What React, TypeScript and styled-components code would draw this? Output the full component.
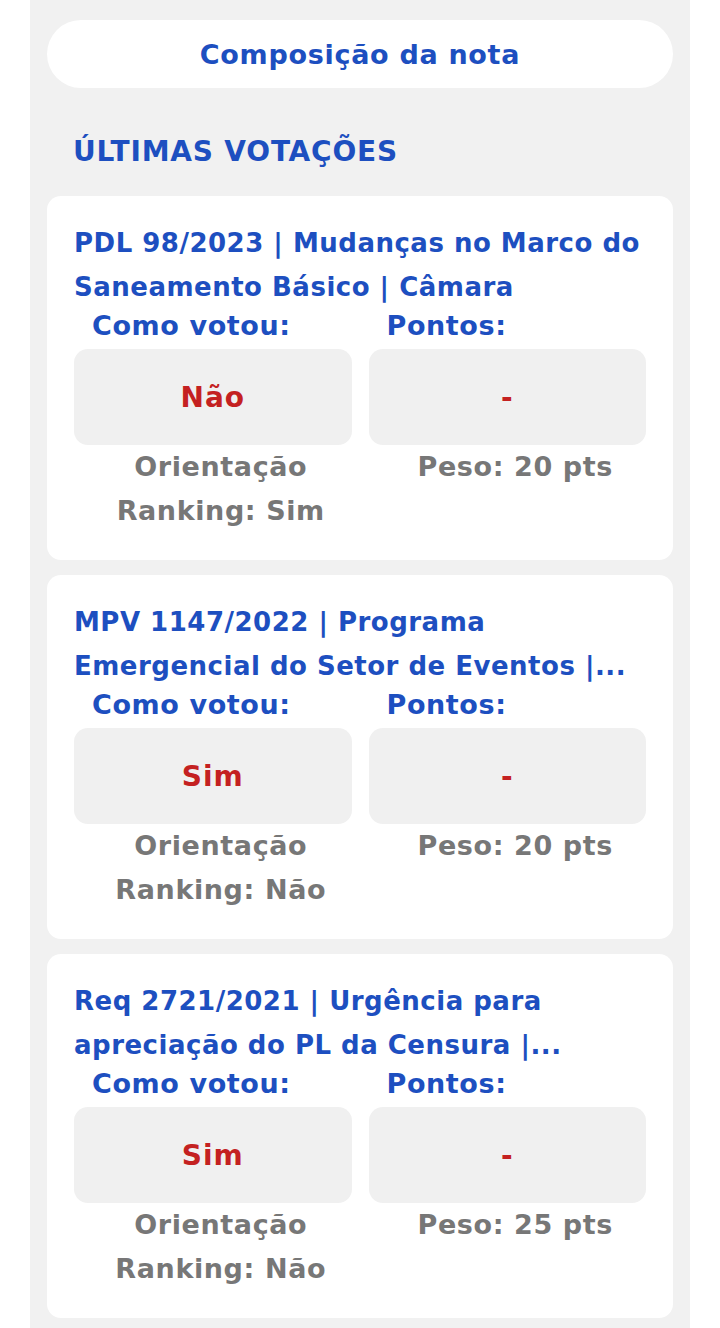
import React from 'react';
import styled, {createGlobalStyle} from 'styled-components';

const GlobalStyle = createGlobalStyle`
  html, body {
    margin: 0;
    padding: 0;
    background: #ffffff;
  }
  body {
    font-family: 'DejaVu Sans', 'Noto Sans', sans-serif;
  }
`;

type Vote = {
  title: string;
  voted: string;
  points: string;
  guidance: string;
  weight: number;
};

const votes: Vote[] = [
  {
    title: 'PDL 98/2023 | Mudanças no Marco do Saneamento Básico | Câmara',
    voted: 'Não',
    points: '-',
    guidance: 'Sim',
    weight: 20,
  },
  {
    title: 'MPV 1147/2022 | Programa Emergencial do Setor de Eventos |...',
    voted: 'Sim',
    points: '-',
    guidance: 'Não',
    weight: 20,
  },
  {
    title: 'Req 2721/2021 | Urgência para apreciação do PL da Censura |...',
    voted: 'Sim',
    points: '-',
    guidance: 'Não',
    weight: 25,
  },
];

const Panel = styled.main`
  margin: 0 30px;
  min-height: 1328px;
  box-sizing: border-box;
  background: #f1f1f1;
  padding: 20px 17px 12px;
`;

const NoteButton = styled.button`
  display: block;
  width: 100%;
  height: 68px;
  border: none;
  border-radius: 34px;
  background: #ffffff;
  color: #1d4fc0;
  font-family: inherit;
  font-weight: 700;
  font-size: 27px;
  letter-spacing: 0.7px;
  cursor: pointer;
`;

const SectionTitle = styled.h2`
  margin: 0;
  padding: 44px 0 24px 26px;
  color: #1d4fc0;
  font-size: 28px;
  letter-spacing: 0.8px;
  line-height: 40px;
  font-weight: 700;
`;

const List = styled.div`
  display: flex;
  flex-direction: column;
  gap: 15px;
`;

const Card = styled.section`
  background: #ffffff;
  border-radius: 14px;
  padding: 25px 27px 27px;
`;

const CardTitle = styled.h3`
  margin: 0 -6px 0 0;
  color: #1d4fc0;
  font-size: 26px;
  letter-spacing: 0.5px;
  line-height: 44px;
  font-weight: 700;
`;

const Grid = styled.div`
  display: grid;
  grid-template-columns: 1fr 1fr;
  column-gap: 17px;
`;

const Label = styled.div`
  padding-left: 18px;
  color: #1d4fc0;
  font-size: 27px;
  letter-spacing: 0.6px;
  line-height: 34px;
  font-weight: 700;
`;

const ValueBox = styled.div`
  height: 96px;
  border-radius: 14px;
  background: #f0f0f0;
  display: flex;
  align-items: center;
  justify-content: center;
  color: #c42121;
  font-size: 28px;
  letter-spacing: 1px;
  font-weight: 700;
  margin-top: 6px;
`;

const Caption = styled.div`
  padding-left: 16px;
  text-align: center;
  color: #777777;
  font-size: 27px;
  letter-spacing: 0.6px;
  line-height: 44px;
  font-weight: 700;
`;

function VoteCard({vote}: {vote: Vote}) {
  return (
    <Card>
      <CardTitle>{vote.title}</CardTitle>
      <Grid>
        <Label>Como votou:</Label>
        <Label>Pontos:</Label>
        <ValueBox>{vote.voted}</ValueBox>
        <ValueBox>{vote.points}</ValueBox>
        <Caption>
          Orientação
          <br />
          Ranking: {vote.guidance}
        </Caption>
        <Caption>Peso: {vote.weight} pts</Caption>
      </Grid>
    </Card>
  );
}

export default function App() {
  return (
    <>
      <GlobalStyle />
      <Panel>
        <NoteButton>Composição da nota</NoteButton>
        <SectionTitle>ÚLTIMAS VOTAÇÕES</SectionTitle>
        <List>
          {votes.map((v) => (
            <VoteCard key={v.title} vote={v} />
          ))}
        </List>
      </Panel>
    </>
  );
}
